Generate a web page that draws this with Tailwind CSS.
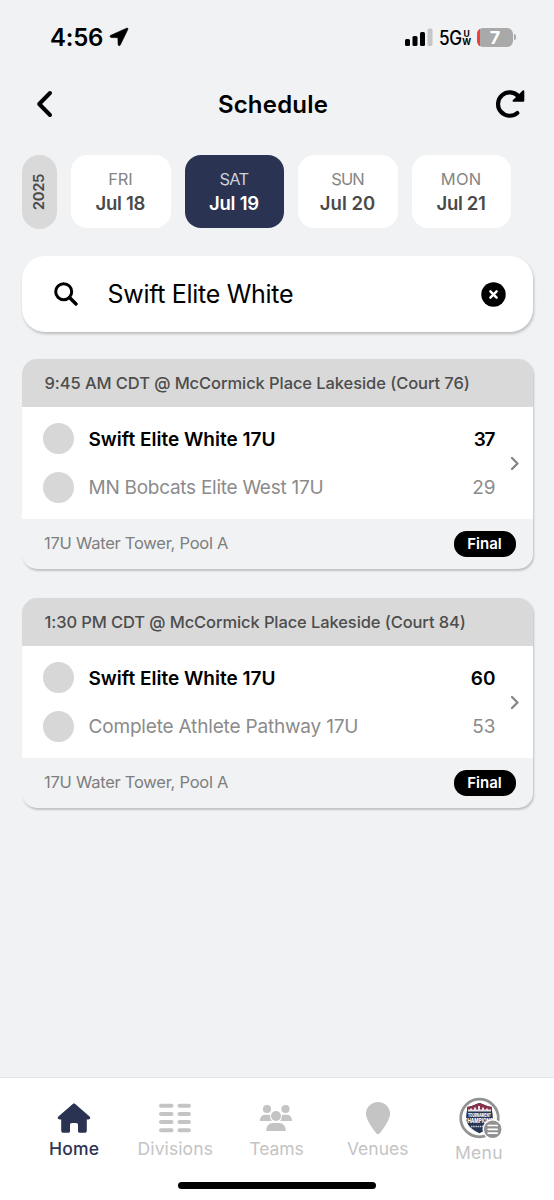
<!DOCTYPE html>
<html lang="en">
<head>
<meta charset="utf-8">
<title>Schedule</title>
<script src="https://cdn.jsdelivr.net/npm/@tailwindcss/browser@4"></script>
</head>
<body class="bg-[#f1f2f4]">
<div class="flex h-[1200px] w-[554px] flex-col overflow-hidden bg-[#f1f2f4] font-['Inter',sans-serif] text-black whitespace-nowrap">

  <!-- Status bar -->
  <div class="flex h-[74px] items-center justify-between pr-[38px] pl-[50px]">
    <div class="flex items-center gap-[6px]">
      <span class="pt-[2px] text-[24px] leading-6 font-semibold tracking-[-0.24px]">4:56</span>
      <svg class="h-5 w-5" viewBox="0 0 20 20"><path d="M17.6 1.2 1.8 8.300C.6 9 .8 10.300 2.200 10.500l6.700.2.2 6.900c.2 1.400 1.600 1.600 2.200.4L18.900 2.300c.3-.9-.4-1.500-1.300-1.100Z" stroke="#000" stroke-width=".6"/></svg>
    </div>
    <div class="flex items-center">
      <svg class="h-[19px] w-7" viewBox="0 0 28 19"><rect x="0" y="11" width="5" height="7" rx="1.500"/><rect x="7.500" y="8" width="5" height="10" rx="1.500"/><rect x="15" y="4" width="5" height="14" rx="1.500"/><rect x="22.500" y="0.500" width="5" height="17.500" rx="1.500" fill="#c5c6c8"/></svg>
      <span class="ml-[6px] w-[23px] origin-left scale-x-[.88] pt-[2px] text-[19.500px] leading-5 font-medium tracking-[-0.300px]">5G</span>
      <span class="flex flex-col items-center pt-px text-[8.500px] leading-[8px] font-bold"><span>U</span><span>W</span></span>
      <div class="relative ml-[6px] flex h-[19px] w-[36px] items-center justify-center overflow-hidden rounded-[6px] bg-[#a9a9a9] text-[18px] font-bold text-white">
        <span class="absolute inset-y-0 left-0 w-[2.500px] bg-[#f0403c]"></span>7
      </div>
      <span class="ml-px h-[6px] w-[2px] rounded-r-full bg-[#a9a9a9]"></span>
    </div>
  </div>

  <!-- Title bar -->
  <header class="flex h-[60px] items-center justify-between pr-[29px] pl-[36px]">
    <svg class="h-7 w-[30px]" viewBox="0 0 30 28" fill="none" stroke="#000" stroke-width="4" stroke-linecap="round" stroke-linejoin="round"><path d="M14 3 3.200 14 14 25"/></svg>
    <h1 class="mr-[15px] pt-px text-[24px] font-semibold tracking-[0.200px]">Schedule</h1>
    <svg class="h-[30px] w-[30px]" viewBox="0 0 30 30"><path d="M23.500 7.300A11.700 11.700 0 1 0 22.300 24" fill="none" stroke="#000" stroke-width="4.200" stroke-linecap="round"/><path d="M27.700 1.600c.8-.8 1.600-.3 1.600.6v9.200c0 .9-.5 1.400-1.400 1.400H18.700c-1.100 0-1.500-1-.7-1.800Z"/></svg>
  </header>

  <!-- Date picker -->
  <div class="mt-[21px] flex gap-[14px] pl-[21.500px] text-center">
    <div class="flex h-[74px] w-[35.500px] items-center justify-center rounded-[18px] bg-[#d9d9d9]">
      <span class="-rotate-90 text-[14.800px] font-semibold tracking-[-0.300px] text-[#4a4a4a]">2025</span>
    </div>
    <div class="flex h-[73px] w-[99.600px] flex-col items-center rounded-[16px] bg-white pt-[13px] pr-px text-[#4a4a4a]">
      <span class="text-[16.500px] leading-[23px] tracking-[-0.200px] text-[#858585]">FRI</span>
      <span class="text-[18.500px] leading-6 font-semibold tracking-[-0.280px]">Jul 18</span>
    </div>
    <div class="flex h-[73px] w-[99.600px] flex-col items-center rounded-[16px] bg-[#2b3352] pt-[13px] pr-px text-white">
      <span class="text-[16.500px] leading-[23px] tracking-[-0.780px] text-[#cfd1d9]">SAT</span>
      <span class="text-[18.500px] leading-6 font-semibold tracking-[-0.200px]">Jul 19</span>
    </div>
    <div class="flex h-[73px] w-[99.600px] flex-col items-center rounded-[16px] bg-white pt-[13px] pr-px text-[#4a4a4a]">
      <span class="text-[16.500px] leading-[23px] tracking-[-0.930px] text-[#858585]">SUN</span>
      <span class="text-[18.500px] leading-6 font-semibold">Jul 20</span>
    </div>
    <div class="flex h-[73px] w-[99.600px] flex-col items-center rounded-[16px] bg-white pt-[13px] pr-px text-[#4a4a4a]">
      <span class="text-[16.500px] leading-[23px] tracking-[0.200px] text-[#858585]">MON</span>
      <span class="text-[18.500px] leading-6 font-semibold tracking-[-0.320px]">Jul 21</span>
    </div>
  </div>

  <!-- Search -->
  <div class="mx-[21.500px] mt-[27px] flex h-[76px] shrink-0 items-center rounded-[23px] bg-white pr-[27px] pl-[32px] shadow-[1px_2px_3px_rgba(0,0,0,0.22)]">
    <svg class="h-6 w-6" viewBox="0 0 24 24" fill="none" stroke="#000" stroke-width="3"><circle cx="9.700" cy="9.700" r="8"/><path d="m15.500 15.500 6.500 6.500" stroke-width="3.400" stroke-linecap="round"/></svg>
    <span class="ml-[30px] flex-1 pt-[2px] text-[25px] tracking-[-0.300px]">Swift Elite White</span>
    <svg class="h-[25px] w-[25px]" viewBox="0 0 25 25"><circle cx="12.500" cy="12.500" r="12.200"/><path d="m9.400 9.400 6.200 6.200m0-6.200-6.200 6.200" stroke="#fff" stroke-width="2.500" stroke-linecap="round"/></svg>
  </div>

  <!-- Games -->
  <main class="mx-[21.500px] mt-[26.500px] flex flex-1 flex-col gap-[28.500px]">
    <article class="flex h-[210.500px] flex-col overflow-hidden rounded-[15px] bg-[#f1f2f4] shadow-[1px_1.500px_2px_rgba(0,0,0,0.2)]">
      <div class="flex h-[48.500px] items-center bg-[#d9d9d9] pt-px pl-[23px] text-[16.500px] font-medium tracking-[-0.080px] text-[#4d4d4d]">9:45 AM CDT @ McCormick Place Lakeside (Court 76)</div>
      <div class="flex h-[112px] items-center bg-white pr-[13px] pl-[21.500px]">
        <div class="flex flex-1 flex-col gap-[17.500px] text-[19px]">
          <div class="flex h-[31px] items-center"><span class="mr-[14.500px] h-[31px] w-[31px] rounded-full bg-[#d7d7d7]"></span><span class="flex-1 pt-[2px] font-semibold">Swift Elite White 17U</span><span class="pt-[2px] pr-[1.500px] font-semibold tracking-[-1.400px]">37</span></div>
          <div class="flex h-[31px] items-center text-[#8b8b8b]"><span class="mr-[14.500px] h-[31px] w-[31px] rounded-full bg-[#d7d7d7]"></span><span class="flex-1 pt-[2px] tracking-[-0.270px]">MN Bobcats Elite West 17U</span><span class="pt-[2px]">29</span></div>
        </div>
        <svg class="ml-[13px] h-4 w-[11px]" viewBox="0 0 11 16" fill="none" stroke="#858585" stroke-width="2.300" stroke-linecap="round" stroke-linejoin="round"><path d="m3 3 5.500 5.500L3 14"/></svg>
      </div>
      <div class="flex flex-1 items-center justify-between pr-[17px] pl-[22.500px]">
        <span class="mb-[1px] text-[16.500px] tracking-[-0.250px] text-[#7e7e7e]">17U Water Tower, Pool A</span>
        <span class="flex h-[26px] w-[62px] items-center justify-center rounded-[12.500px] bg-black pt-px text-[15px] font-semibold text-white">Final</span>
      </div>
    </article>

    <article class="flex h-[210.500px] flex-col overflow-hidden rounded-[15px] bg-[#f1f2f4] shadow-[1px_1.500px_2px_rgba(0,0,0,0.2)]">
      <div class="flex h-[48.500px] items-center bg-[#d9d9d9] pt-px pl-[23px] text-[16.500px] font-medium tracking-[-0.100px] text-[#4d4d4d]">1:30 PM CDT @ McCormick Place Lakeside (Court 84)</div>
      <div class="flex h-[112px] items-center bg-white pr-[13px] pl-[21.500px]">
        <div class="flex flex-1 flex-col gap-[17.500px] text-[19px]">
          <div class="flex h-[31px] items-center"><span class="mr-[14.500px] h-[31px] w-[31px] rounded-full bg-[#d7d7d7]"></span><span class="flex-1 pt-[2px] font-semibold">Swift Elite White 17U</span><span class="pt-[2px] font-semibold">60</span></div>
          <div class="flex h-[31px] items-center text-[#8b8b8b]"><span class="mr-[14.500px] h-[31px] w-[31px] rounded-full bg-[#d7d7d7]"></span><span class="flex-1 pt-[2px] tracking-[-0.180px]">Complete Athlete Pathway 17U</span><span class="pt-[2px]">53</span></div>
        </div>
        <svg class="ml-[13px] h-4 w-[11px]" viewBox="0 0 11 16" fill="none" stroke="#858585" stroke-width="2.300" stroke-linecap="round" stroke-linejoin="round"><path d="m3 3 5.500 5.500L3 14"/></svg>
      </div>
      <div class="flex flex-1 items-center justify-between pr-[17px] pl-[22.500px]">
        <span class="mb-[1px] text-[16.500px] tracking-[-0.250px] text-[#7e7e7e]">17U Water Tower, Pool A</span>
        <span class="flex h-[26px] w-[62px] items-center justify-center rounded-[12.500px] bg-black pt-px text-[15px] font-semibold text-white">Final</span>
      </div>
    </article>
  </main>

  <!-- Tab bar -->
  <nav class="flex h-[123px] shrink-0 flex-col items-center border-t border-[#e2e3e5] bg-white">
    <div class="mr-px grid h-[104px] w-[506px] grid-cols-5 text-[17.500px] leading-5 text-[#c4c4c4]">
      <div class="flex flex-col items-center pt-[23px] font-medium text-[#2b3352]">
        <svg class="h-[34px] w-[34px]" viewBox="0 0 34 34" fill="currentColor"><path d="M15.800 2.900c.7-.6 1.700-.6 2.400 0L32.600 15.600c1.300 1.200.6 2.900-1.100 2.900h-1.700v11c0 1.400-.9 2.300-2.300 2.300h-4.700c-1.200 0-1.800-.7-1.800-1.800v-6c0-1.200-.7-1.900-1.900-1.900h-4.200c-1.200 0-1.900.7-1.900 1.900v6c0 1.100-.6 1.800-1.800 1.800H6.500c-1.400 0-2.300-.9-2.300-2.300v-11H2.500c-1.700 0-2.400-1.700-1.100-2.900Z"/></svg>
        <span class="mt-1 tracking-[0.200px]">Home</span>
      </div>
      <div class="flex flex-col items-center pt-[23px]">
        <svg class="h-[34px] w-[34px]" viewBox="0 0 34 34" stroke="currentColor" stroke-width="4" stroke-linecap="round"><path d="M3 4.700h10.500m8 0H31M3 12.900h10.500m8 0H31M3 21h10.500m8 0H31M3 29.200h10.500m8 0H31"/></svg>
        <span class="mt-1 tracking-[0.100px]">Divisions</span>
      </div>
      <div class="flex flex-col items-center pt-[23px]">
        <svg class="h-[34px] w-[34px]" viewBox="0 0 34 34" fill="currentColor"><circle cx="8" cy="8" r="4.100"/><circle cx="26.500" cy="8" r="4.100"/><path d="M.8 20c0-3.500 2.300-6.200 5.300-6.200h3.400c.7 0 1.200.1 1.600.3-.1 2.500.5 4.500 1.700 5.900Zm32.400 0c0-3.500-2.300-6.200-5.300-6.200h-3.400c-.7 0-1.200.1-1.600.3.1 2.500-.5 4.500-1.700 5.900Z"/><circle cx="17" cy="15" r="5"/><path d="M7.200 30c0-5 2.800-8 6.500-8h6.600c3.700 0 6.500 3 6.500 8Z"/></svg>
        <span class="mt-1 tracking-[-0.100px]">Teams</span>
      </div>
      <div class="flex flex-col items-center pt-[23px]">
        <svg class="h-[34px] w-[26px]" viewBox="0 0 26 34" fill="currentColor"><path d="M13 .9C6.200.9.900 6.100.900 12.700c0 5.200 6.400 14.600 10.600 19.900.8 1 2.200 1 3 0 4.200-5.300 10.600-14.700 10.600-19.900C25.100 6.100 19.800.9 13 .9Z"/></svg>
        <span class="mt-1">Venues</span>
      </div>
      <div class="flex flex-col items-center pt-[19px]">
        <svg class="h-[42px] w-[46px]" viewBox="0 0 46 42">
          <circle cx="23.500" cy="21" r="18.800" fill="#fff" stroke="#929292" stroke-width="2.700"/>
          <path d="M11 10c4-.3 6-1.800 12.500-4C30 8.200 32 9.700 36 10c-.7 3.200.8 5 .8 10.500 0 7.500-5 12-13.300 15.700C15.200 32.500 10.200 28 10.200 20.500 10.200 15 11.700 13.200 11 10Z" fill="#263455"/>
          <path d="M11 10c4-.3 6-1.800 12.500-4C30 8.200 32 9.700 36 10l-.3 4H11.300Z" fill="#8a2f4c"/>
          <path d="M12 14.500v-2h2v-1h2v1h2v-2h2v2h2v-3.500h2v3.500h2v-2h2v2h2v-1h2v1h3v2Z" fill="#e3dfe6"/>
          <g fill="#fff" font-family="Inter, sans-serif" font-weight="800" text-anchor="middle"><text x="23.500" y="19.500" font-size="4.600" textLength="23" lengthAdjust="spacingAndGlyphs">TOURNAMENT</text><text x="22.500" y="26.300" font-size="6.400" textLength="29" lengthAdjust="spacingAndGlyphs">CHAMPIONS</text></g>
          <path d="M15 29.500h14" stroke="#c7ccd8" stroke-width="1.500" stroke-dasharray="1.500 .7"/>
          <circle cx="36.700" cy="32.300" r="9.500" fill="#929292" stroke="#fff" stroke-width="1.500"/>
          <path d="M32.200 28.500h9m-9 3.800h9m-9 3.800h9" stroke="#fff" stroke-width="1.700" stroke-linecap="round"/>
        </svg>
        <span class="mt-1 tracking-[0.300px]">Menu</span>
      </div>
    </div>
    <div class="h-[7px] w-[198px] rounded-full bg-black"></div>
  </nav>
</div>
</body>
</html>
